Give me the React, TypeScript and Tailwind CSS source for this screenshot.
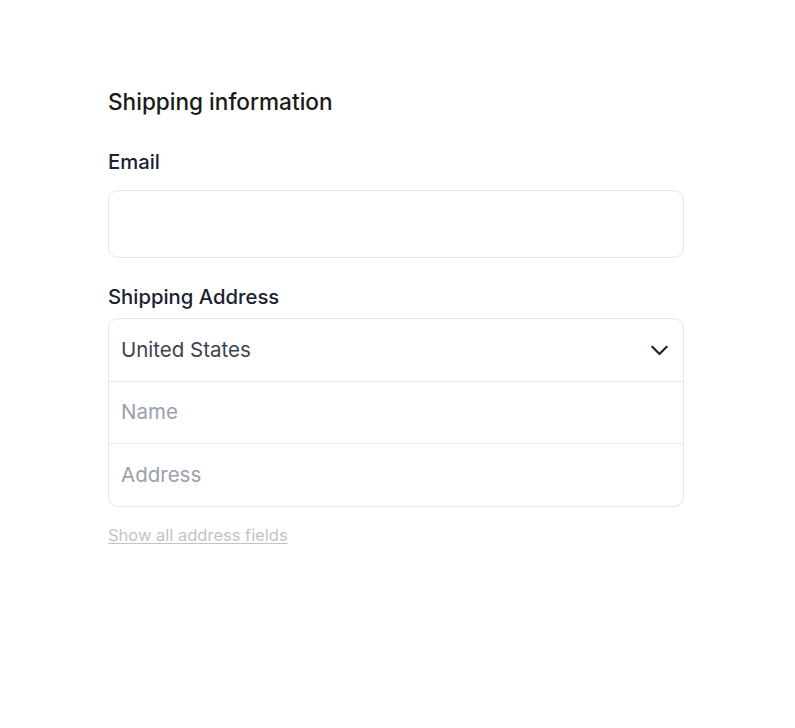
import React from "react";

export default function App() {
  return (
    <div className="min-h-screen bg-white" style={{ fontFamily: "Inter, 'Noto Sans', sans-serif" }}>
      <div className="ml-[108px] w-[576px] pt-[88px]">
        <h2 className="text-[22.6px] leading-[28px] font-medium text-[#1a1a1a]">Shipping information</h2>

        <label className="block mt-[34px] text-[20.3px] leading-[24px] font-medium text-[#1a2233]">Email</label>
        <div className="mt-[16px] h-[68px] rounded-[10px] border border-[#e6e6e6] bg-white" />

        <label className="block mt-[27px] text-[20.3px] leading-[24px] font-medium text-[#1a2233]">Shipping Address</label>
        <div className="mt-[9px] rounded-[10px] border border-[#e6e6e6] bg-white">
          <div className="flex h-[63px] items-center justify-between pl-[12px] pr-[15px] border-b border-[#ebebeb]">
            <span className="text-[20.5px] text-[#3c4350]">United States</span>
            <svg width="17" height="11" viewBox="0 0 17 11" fill="none" stroke="#1a2233" strokeWidth="2.2" strokeLinecap="round" strokeLinejoin="round">
              <path d="M1.3 1.8l7.2 7.2 7.2-7.2" />
            </svg>
          </div>
          <div className="flex h-[62px] items-center pl-[12px] border-b border-[#ebebeb]">
            <span className="text-[20.5px] text-[#9aa0ad]">Name</span>
          </div>
          <div className="flex h-[62px] items-center pl-[12px]">
            <span className="text-[20.5px] text-[#9aa0ad]">Address</span>
          </div>
        </div>

        <a className="block mt-[16px] text-[16.5px] leading-[24px] text-[#c4c4c4] underline underline-offset-2 cursor-pointer">
          Show all address fields
        </a>
      </div>
    </div>
  );
}
